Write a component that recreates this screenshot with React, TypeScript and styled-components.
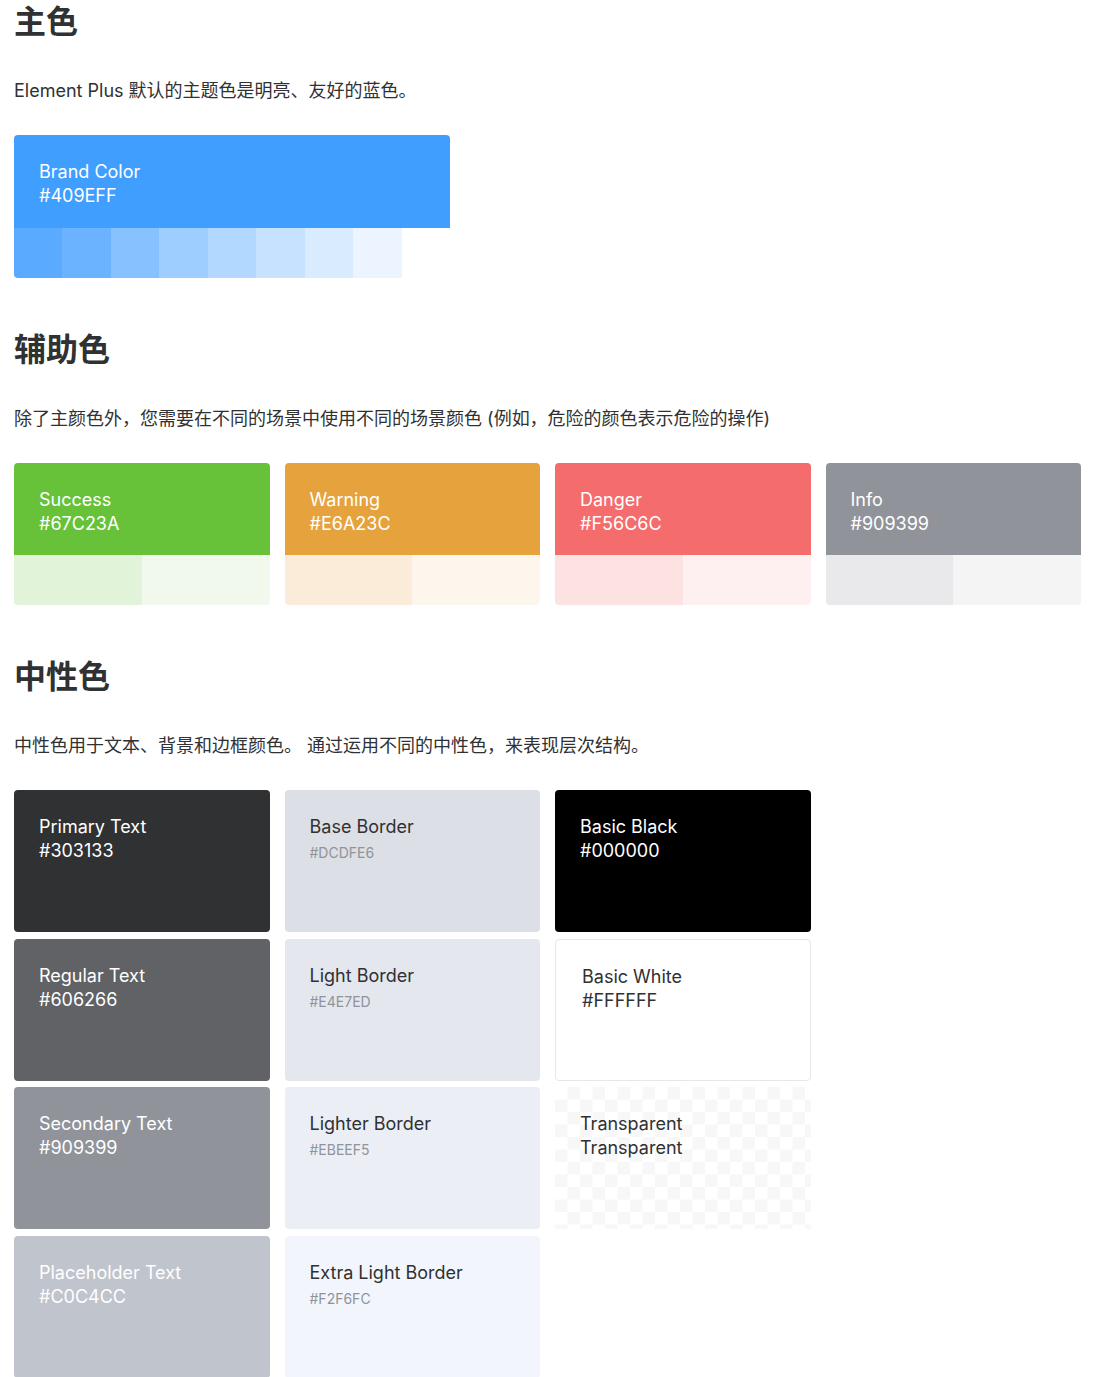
import React from "react";
import styled, { createGlobalStyle } from "styled-components";

const Global = createGlobalStyle`
  body { margin: 0; background: #fff; font-family: Inter, "Noto Sans CJK SC", sans-serif; color: #303133; }
`;

const Page = styled.div`padding: 0 14px;`;
const Title = styled.h2<{ $first?: boolean }>`
  margin: ${p => (p.$first ? "0" : "50px")} 0 35px;
  font-size: 32px; line-height: 44px; font-weight: 700; color: #303133;
`;
const Desc = styled.p`margin: 0 0 32px; font-size: 18px; line-height: 24px; color: #303133;`;

const Brand = styled.div`width: 436px; border-radius: 4px; overflow: hidden;`;
const Main = styled.div<{ $bg: string; $h?: number }>`
  background: ${p => p.$bg}; height: ${p => p.$h ?? 93}px; box-sizing: border-box;
  padding: 25px 25px; color: #fff; font-size: 18px; line-height: 24px;
`;
const Strip = styled.div<{ $cols: number }>`display: grid; grid-template-columns: repeat(${p => p.$cols}, 1fr); height: 50px;`;
const Swatch = styled.div<{ $bg: string }>`background: ${p => p.$bg};`;

const Grid4 = styled.div`display: grid; grid-template-columns: repeat(4, 1fr); column-gap: 15px;`;
const Card = styled.div`border-radius: 4px; overflow: hidden;`;

const NeutralGrid = styled.div`
  display: grid; grid-template-columns: repeat(4, 1fr); column-gap: 15px; grid-auto-flow: column;
  grid-template-rows: repeat(4, 142px); row-gap: 6.7px;
`;
const NBlock = styled.div<{ $bg: string; $fg: string; $border?: boolean; $checker?: boolean }>`
  background: ${p => p.$bg}; color: ${p => p.$fg}; border-radius: 4px; box-sizing: border-box;
  padding: 25px; font-size: 18px; line-height: 24px;
  ${p => p.$border && "border: 1px solid #e4e7ed; padding: 25px 26px;"}
  ${p => p.$checker && `
    border-radius: 0;
    background-color: #fff;
    background-image: linear-gradient(45deg, #f7f7f7 25%, transparent 25%, transparent 75%, #f7f7f7 75%),
      linear-gradient(45deg, #f7f7f7 25%, transparent 25%, transparent 75%, #f7f7f7 75%);
    background-size: 25px 25px; background-position: 0 0, 12.5px 12.5px;
  `}
`;
const Code = styled.div<{ $small?: boolean }>`
  ${p => p.$small && "font-size: 14px; color: #909399; margin-top: 4px; line-height: 20px;"}
`;

const brandShades = ["#5aabff", "#6cb3ff", "#87c2ff", "#9ecdff", "#b3d8ff", "#c6e2ff", "#d9ecff", "#ecf5ff"];
const secondary = [
  { n: "Success", c: "#67C23A", l: ["#e1f3d8", "#f0f9eb"] },
  { n: "Warning", c: "#E6A23C", l: ["#faecd8", "#fdf6ec"] },
  { n: "Danger", c: "#F56C6C", l: ["#fde2e2", "#fef0f0"] },
  { n: "Info", c: "#909399", l: ["#e9e9eb", "#f4f4f5"] },
];

export default function App() {
  return (
    <Page>
      <Global />
      <Title $first>主色</Title>
      <Desc>Element Plus 默认的主题色是明亮、友好的蓝色。</Desc>
      <Brand>
        <Main $bg="#409EFF">Brand Color<br />#409EFF</Main>
        <Strip $cols={9}>
          {brandShades.map(s => <Swatch key={s} $bg={s} />)}
        </Strip>
      </Brand>

      <Title>辅助色</Title>
      <Desc>除了主颜色外，您需要在不同的场景中使用不同的场景颜色 (例如，危险的颜色表示危险的操作)</Desc>
      <Grid4>
        {secondary.map(s => (
          <Card key={s.n}>
            <Main $bg={s.c} $h={92}>{s.n}<br />{s.c}</Main>
            <Strip $cols={2}>{s.l.map(l => <Swatch key={l} $bg={l} />)}</Strip>
          </Card>
        ))}
      </Grid4>

      <Title>中性色</Title>
      <Desc>中性色用于文本、背景和边框颜色。 通过运用不同的中性色，来表现层次结构。</Desc>
      <NeutralGrid>
        <NBlock $bg="#303133" $fg="#fff">Primary Text<Code>#303133</Code></NBlock>
        <NBlock $bg="#606266" $fg="#fff">Regular Text<Code>#606266</Code></NBlock>
        <NBlock $bg="#909399" $fg="#fff">Secondary Text<Code>#909399</Code></NBlock>
        <NBlock $bg="#C0C4CC" $fg="#fff">Placeholder Text<Code>#C0C4CC</Code></NBlock>
        <NBlock $bg="#DCDFE6" $fg="#303133">Base Border<Code $small>#DCDFE6</Code></NBlock>
        <NBlock $bg="#E4E7ED" $fg="#303133">Light Border<Code $small>#E4E7ED</Code></NBlock>
        <NBlock $bg="#EBEEF5" $fg="#303133">Lighter Border<Code $small>#EBEEF5</Code></NBlock>
        <NBlock $bg="#F2F6FC" $fg="#303133">Extra Light Border<Code $small>#F2F6FC</Code></NBlock>
        <NBlock $bg="#000000" $fg="#fff">Basic Black<Code>#000000</Code></NBlock>
        <NBlock $bg="#FFFFFF" $fg="#303133" $border>Basic White<Code>#FFFFFF</Code></NBlock>
        <NBlock $bg="#fff" $fg="#303133" $checker>Transparent<Code>Transparent</Code></NBlock>
      </NeutralGrid>
    </Page>
  );
}
